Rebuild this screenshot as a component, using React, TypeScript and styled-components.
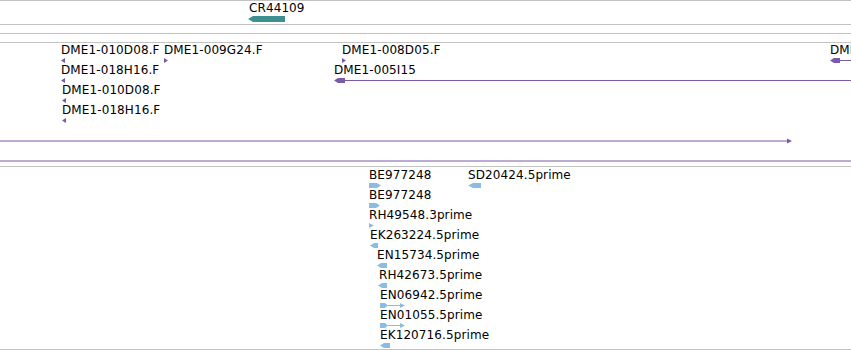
import React from 'react';
import styled, {createGlobalStyle} from 'styled-components';

const GlobalStyle = createGlobalStyle`
    html, body {
        margin: 0;
        padding: 0;
        background: #ffffff;
        overflow: hidden;
    }
    body {
        font-family: "DejaVu Sans", "Liberation Sans", sans-serif;
        font-size: 12px;
        color: #000000;
    }
`

const PURPLE = '#7a5ba9';
const BLUE = '#8bbde2';
const TEAL = '#3d8f92';

const Browser = styled.div`
    width: 851px;
    height: 350px;
    display: flex;
    flex-direction: column;
    border-bottom: 1px solid #c3c3c3;
    box-sizing: border-box;
`

const Track = styled.div<{height: number}>`
    position: relative;
    height: ${props => props.height}px;
    border-top: 1px solid #c3c3c3;
    overflow: hidden;
    flex-shrink: 0;
`

const FillTrack = styled(Track)`
    flex: 1;
`

const Feature = styled.div`
    position: absolute;
    display: flex;
    flex-direction: column;
    align-items: flex-start;
`

const Label = styled.span<{shift: number}>`
    line-height: 13px;
    height: 13px;
    white-space: nowrap;
    letter-spacing: 0.1px;
    margin-left: ${props => props.shift}px;
`

const Glyph = styled.svg`
    display: block;
    overflow: visible;
`

const GlyphGap = styled.div<{gap: number}>`
    height: ${props => props.gap}px;
`

type Shape = {
    dir: 'l' | 'r';
    block: number;
    point?: number;
    line?: number;
    head?: boolean;
    h?: number;
    color: string;
};

const ShapeSvg = ({dir, block, point = 3, line = 0, head = false, h = 6, color}: Shape) => {
    const w = block + line + (head ? 5 : 0);
    const m = h / 2;
    let body: React.ReactNode = null;
    if (block > 0) {
        if (dir === 'l') {
            body = <polygon points={`0,${m} ${point},0 ${block},0 ${block},${h} ${point},${h}`} fill={color}/>;
        } else {
            body = <polygon points={`0,0 ${block - point},0 ${block},${m} ${block - point},${h} 0,${h}`} fill={color}/>;
        }
    }
    return (
        <Glyph width={w} height={h} viewBox={`0 0 ${w} ${h}`}>
            {body}
            {line > 0 && <line x1={block} y1={m} x2={block + line} y2={m} stroke={color} strokeWidth={1}/>}
            {head && <polygon points={`${block + line},${m - 2.5} ${block + line + 5},${m} ${block + line},${m + 2.5}`} fill={color}/>}
        </Glyph>
    );
};

type Item = {
    x: number;
    y: number;
    label?: string;
    shift?: number;
    gap?: number;
    shape: Shape;
};

// positions are relative to the track they sit in
const geneFeatures: Item[] = [
    {x: 248, y: 1, label: 'CR44109', shift: 1, gap: 1, shape: {dir: 'l', block: 37, point: 5, h: 6, color: TEAL}},
];

const estFeatures: Item[] = [
    {x: 61, y: 1, label: 'DME1-010D08.F', gap: 1, shape: {dir: 'l', block: 4, point: 4, h: 5, color: PURPLE}},
    {x: 164, y: 1, label: 'DME1-009G24.F', gap: 1, shape: {dir: 'r', block: 4, point: 4, h: 5, color: PURPLE}},
    {x: 342, y: 1, label: 'DME1-008D05.F', gap: 1, shape: {dir: 'r', block: 4, point: 4, h: 5, color: PURPLE}},
    {x: 830, y: 1, label: 'DME1-002A11', gap: 1, shape: {dir: 'l', block: 10, point: 4, line: 30, h: 5, color: PURPLE}},
    {x: 61, y: 21, label: 'DME1-018H16.F', gap: 1, shape: {dir: 'l', block: 4, point: 4, h: 5, color: PURPLE}},
    {x: 334, y: 21, label: 'DME1-005I15', gap: 1, shape: {dir: 'l', block: 11, point: 4, line: 520, h: 5, color: PURPLE}},
    {x: 62, y: 41, label: 'DME1-010D08.F', gap: 1, shape: {dir: 'l', block: 4, point: 4, h: 5, color: PURPLE}},
    {x: 62, y: 61, label: 'DME1-018H16.F', gap: 1, shape: {dir: 'l', block: 4, point: 4, h: 5, color: PURPLE}},
    {x: -2, y: 95, shape: {dir: 'r', block: 0, line: 789, head: true, h: 6, color: PURPLE}},
    {x: -2, y: 115, shape: {dir: 'r', block: 0, line: 860, h: 6, color: PURPLE}},
];

const cdnaFeatures: Item[] = [
    {x: 369, y: 2, label: 'BE977248', gap: 1, shape: {dir: 'r', block: 12, point: 4, h: 5, color: BLUE}},
    {x: 468, y: 2, label: 'SD20424.5prime', gap: 1, shape: {dir: 'l', block: 13, point: 5, h: 5, color: BLUE}},
    {x: 369, y: 22, label: 'BE977248', gap: 1, shape: {dir: 'r', block: 11, point: 4, h: 5, color: BLUE}},
    {x: 369, y: 42, label: 'RH49548.3prime', gap: 1, shape: {dir: 'r', block: 5, point: 5, h: 5, color: BLUE}},
    {x: 370, y: 62, label: 'EK263224.5prime', gap: 1, shape: {dir: 'l', block: 8, point: 4, h: 5, color: BLUE}},
    {x: 377, y: 82, label: 'EN15734.5prime', gap: 1, shape: {dir: 'l', block: 10, point: 4, h: 5, color: BLUE}},
    {x: 378, y: 102, label: 'RH42673.5prime', shift: 1, gap: 1, shape: {dir: 'l', block: 9, point: 4, h: 5, color: BLUE}},
    {x: 380, y: 122, label: 'EN06942.5prime', gap: 1, shape: {dir: 'r', block: 8, point: 3, line: 12, head: true, h: 5, color: BLUE}},
    {x: 380, y: 142, label: 'EN01055.5prime', gap: 1, shape: {dir: 'r', block: 8, point: 3, line: 12, head: true, h: 5, color: BLUE}},
    {x: 380, y: 162, label: 'EK120716.5prime', gap: 1, shape: {dir: 'l', block: 10, point: 4, h: 5, color: BLUE}},
];

const Features = ({items}: {items: Item[]}) => (
    <>
        {items.map((f, i) => (
            <Feature key={i} style={{left: f.x, top: f.y}}>
                {f.label && <Label shift={f.shift ?? 0}>{f.label}</Label>}
                {f.label && <GlyphGap gap={f.gap ?? 0}/>}
                <ShapeSvg {...f.shape}/>
            </Feature>
        ))}
    </>
);

const App = () => {
    return (
        <>
            <GlobalStyle/>
            <Browser>
                <Track height={23}>
                    <Features items={geneFeatures}/>
                </Track>
                <Track height={8}/>
                <Track height={8}/>
                <Track height={123}>
                    <Features items={estFeatures}/>
                </Track>
                <FillTrack height={182}>
                    <Features items={cdnaFeatures}/>
                </FillTrack>
            </Browser>
        </>
    );
};

export default App;
